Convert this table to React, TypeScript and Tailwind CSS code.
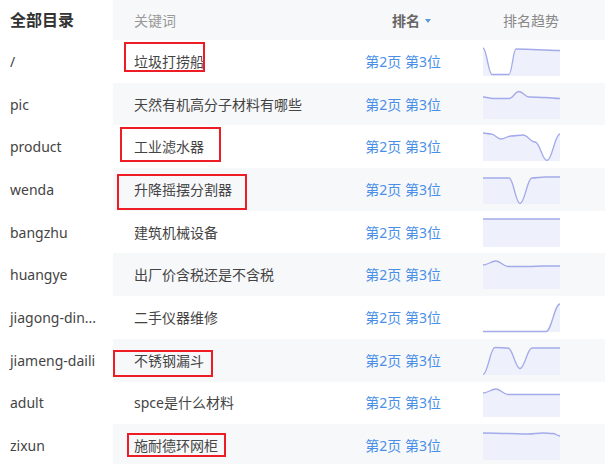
// 关键词排名列表：左侧目录 + 右侧关键词/排名/趋势表格
import * as React from "react";

type Pt = [number, number];

interface Row {
  dir: string;
  keyword: string;
  rank: string;
  trend: Pt[];
}

const W = 77;
const H = 29;

// ---------- 数据 ----------
const rows: Row[] = [
  { dir: "/", keyword: "垃圾打捞船", rank: "第2页 第3位", trend: [[0, 1], [9, 27.5], [26, 27.5], [33, 2], [77, 3.5]] },
  { dir: "pic", keyword: "天然有机高分子材料有哪些", rank: "第2页 第3位", trend: [[0, 7], [10, 8.5], [26, 8.5], [36, 1.5], [46, 7], [62, 7.5], [77, 8.5]] },
  { dir: "product", keyword: "工业滤水器", rank: "第2页 第3位", trend: [[0, 1], [8, 2], [18, 7], [28, 4], [40, 3], [52, 10], [64, 28.5], [77, 2]] },
  { dir: "wenda", keyword: "升降摇摆分割器", rank: "第2页 第3位", trend: [[0, 3], [26, 3], [37, 28.5], [49, 3], [62, 2], [77, 2]] },
  { dir: "bangzhu", keyword: "建筑机械设备", rank: "第2页 第3位", trend: [[0, 1], [77, 1]] },
  { dir: "huangye", keyword: "出厂价含税还是不含税", rank: "第2页 第3位", trend: [[0, 5], [13, 1], [25, 6.5], [45, 6.5], [60, 6], [77, 6]] },
  { dir: "jiagong-din...", keyword: "二手仪器维修", rank: "第2页 第3位", trend: [[0, 28.5], [63, 28.5], [77, 1]] },
  { dir: "jiameng-daili", keyword: "不锈钢漏斗", rank: "第2页 第3位", trend: [[0, 28.5], [12, 1.5], [25, 2], [37, 22.5], [49, 2], [62, 2], [77, 2]] },
  { dir: "adult", keyword: "spce是什么材料", rank: "第2页 第3位", trend: [[0, 5], [13, 1], [25, 6.5], [45, 6.5], [60, 6.5], [77, 6.5]] },
  { dir: "zixun", keyword: "施耐德环网柜", rank: "第2页 第3位", trend: [[0, 2], [25, 2.5], [45, 3], [60, 2], [70, 2.5], [77, 5]] },
];

// 需要红框标注的关键词（相对整页的位置）
const marks = [
  { left: 124, top: 42, w: 81, h: 30 },
  { left: 120, top: 127, w: 101, h: 35 },
  { left: 117, top: 174, w: 130, h: 36 },
  { left: 113, top: 350, w: 100, h: 27 },
  { left: 127, top: 433, w: 99, h: 24 },
];

// ---------- 平滑曲线 ----------
function smoothPath(pts: Pt[]): string {
  if (pts.length < 2) return "";
  let d = `M${pts[0][0]},${pts[0][1]}`;
  for (let i = 0; i < pts.length - 1; i++) {
    const [x0, y0] = pts[i];
    const [x1, y1] = pts[i + 1];
    const dx = (x1 - x0) * 0.4;
    d += ` C${x0 + dx},${y0} ${x1 - dx},${y1} ${x1},${y1}`;
  }
  return d;
}

const Sparkline: React.FC<{ pts: Pt[] }> = ({ pts }) => {
  const line = smoothPath(pts);
  const area = `${line} L${W},${H} L0,${H} Z`;
  return (
    <svg width={W} height={H} viewBox={`0 0 ${W} ${H}`} className="block overflow-visible">
      <path d={area} fill="#eef0fb" />
      <path d={line} fill="none" stroke="#a3aaea" strokeWidth={1.3} />
    </svg>
  );
};

const rowH = "h-[42.7px]";

export default function App() {
  return (
    <div
      className="relative flex h-[464px] w-[605px] overflow-hidden bg-white"
      style={{ fontFamily: '"Noto Sans", "Noto Sans CJK SC", sans-serif' }}
    >
      {/* 左侧目录 */}
      <div className="w-[113px] shrink-0">
        <div className="flex h-[40px] items-center pl-[10px] text-[16px] font-bold text-[#333]">
          全部目录
        </div>
        {rows.map((r, i) => (
          <div key={i} className={`flex ${rowH} items-center whitespace-nowrap pl-[10px] text-[14px] text-[#444]`}>
            {r.dir}
          </div>
        ))}
      </div>

      {/* 右侧表格 */}
      <div className="flex-1">
        <div className="flex h-[40px] items-center bg-[#f7f8fa] text-[14px]">
          <div className="w-[231px] pl-[21px] text-[#999]">关键词</div>
          <div className="flex w-[97px] items-center justify-end pr-[10px] font-bold text-[#666]">
            排名
            <span className="ml-[5px] mt-[2px] h-0 w-0 border-x-[3px] border-t-[4px] border-x-transparent border-t-[#5b9bd5]" />
          </div>
          <div className="ml-[62px] text-[#888]">排名趋势</div>
        </div>
        {rows.map((r, i) => (
          <div key={i} className={`flex ${rowH} items-center ${i % 2 === 1 ? "bg-[#f7f8fa]" : "bg-white"}`}>
            <div className="w-[231px] whitespace-nowrap pl-[21px] text-[14px] text-[#444]">{r.keyword}</div>
            <div className="w-[97px] whitespace-nowrap text-right text-[14px] text-[#4a8fe7]">{r.rank}</div>
            <div className="ml-[42px]">
              <Sparkline pts={r.trend} />
            </div>
          </div>
        ))}
      </div>

      {/* 红框标注 */}
      {marks.map((m, i) => (
        <div
          key={i}
          className="absolute border-2 border-[#ee1c25]"
          style={{ left: m.left, top: m.top, width: m.w, height: m.h }}
        />
      ))}
    </div>
  );
}
